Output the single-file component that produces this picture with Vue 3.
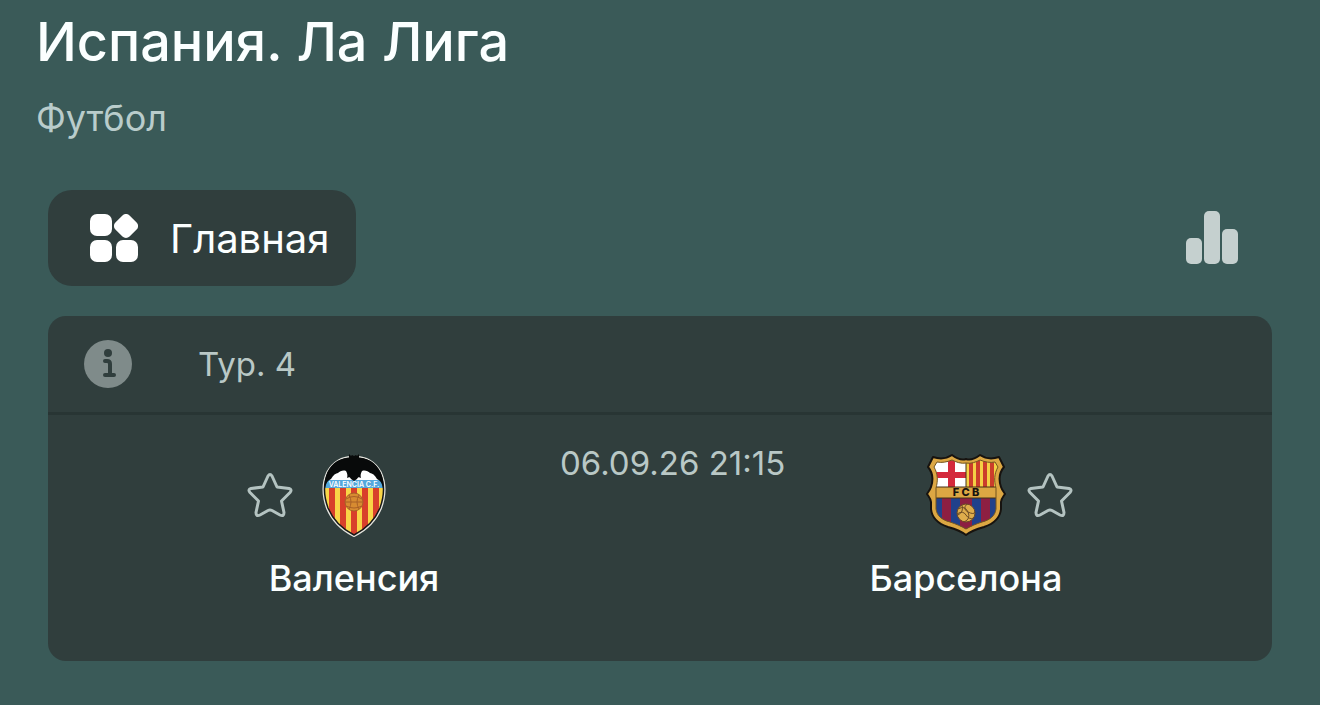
<template>
  <main class="page">
    <header class="heading">
      <h1>{{ league.title }}</h1>
      <p>{{ league.sport }}</p>
    </header>

    <nav class="tabs">
      <button class="tab" type="button">
        <svg class="tab-icon" viewBox="0 0 48 48" aria-hidden="true">
          <rect x="0" y="0" width="22" height="22" rx="7" />
          <rect x="26" y="2" width="20" height="20" rx="5" transform="rotate(45 36 12)" />
          <rect x="0" y="26" width="22" height="22" rx="7" />
          <rect x="26" y="26" width="22" height="22" rx="7" />
        </svg>
        <span>Главная</span>
      </button>
      <button class="stats" type="button" aria-label="Статистика">
        <svg viewBox="0 0 52 54" aria-hidden="true">
          <rect x="0" y="27" width="16" height="26" rx="5" />
          <rect x="18" y="0" width="16" height="53" rx="5" />
          <rect x="36" y="18" width="16" height="35" rx="5" />
        </svg>
      </button>
    </nav>

    <section class="card">
      <div class="card-head">
        <svg class="info" viewBox="0 0 48 48" aria-hidden="true">
          <circle class="info-disc" cx="24" cy="24" r="24" />
          <circle class="info-dot" cx="24" cy="13" r="4" />
          <path class="info-stem" d="M21 21h2q3 0 3 3v11M21 35h9" />
        </svg>
        <span>{{ league.round }}</span>
      </div>

      <div class="match">
        <div class="team">
          <div class="team-top">
            <button class="star" type="button" aria-label="В избранное: Валенсия">
              <svg viewBox="0 0 48 48" aria-hidden="true">
                <path :d="starPath" />
              </svg>
            </button>
            <svg class="crest" viewBox="0 0 84 84" aria-hidden="true">
              <defs>
                <clipPath id="vcf-body">
                  <path :d="valenciaShield" />
                </clipPath>
              </defs>
              <path :d="valenciaShield" fill="#fff" stroke="#e4e4de" stroke-width="4" />
              <g clip-path="url(#vcf-body)">
                <path d="M8 4h68v24H8z" fill="#fff" />
                <rect x="8" y="34" width="68" height="50" fill="#f9d547" />
                <path
                  d="M17 34h6v50h-6zM28 34h6v50h-6zM39 34h6v50h-6zM50 34h6v50h-6zM61 34h6v50h-6z"
                  fill="#d8402b"
                />
                <path d="M8 27h68v8H8z" fill="#55a8dc" />
              </g>
              <path :d="valenciaShield" fill="none" stroke="#171717" stroke-width="1.500" />
              <path :d="valenciaBat" fill="#080a0a" />
              <text x="42" y="34" class="vcf-name">VALENCIA C.F.</text>
              <g class="vcf-ball">
                <circle cx="42" cy="49" r="9" />
                <path d="M34 46q8-5 16 0M34 53q8 4 16 0M37 42q4 7 0 14M47 42q-4 7 0 14M33 49h18" />
              </g>
            </svg>
          </div>
          <span class="team-name">Валенсия</span>
        </div>

        <time class="kickoff" datetime="2026-09-06T21:15">06.09.26 21:15</time>

        <div class="team">
          <div class="team-top">
            <svg class="crest" viewBox="0 0 84 84" aria-hidden="true">
              <defs>
                <clipPath id="fcb-body">
                  <path :d="barcaInner" />
                </clipPath>
              </defs>
              <path :d="barcaShield" fill="#dca743" stroke="#17130f" stroke-width="2" stroke-linejoin="round" />
              <g clip-path="url(#fcb-body)">
                <path d="M8 6h34v28H8z" fill="#fff" />
                <path d="M8 19h34v6H8zM24 6h7v28h-7z" fill="#d4293c" />
                <path d="M42 6h34v28H42z" fill="#f4cf45" />
                <path d="M45 6h4v28h-4zM52 6h4v28h-4zM59 6h4v28h-4zM66 6h4v28h-4z" fill="#cb3d2b" />
                <path d="M8 45h68v36H8z" fill="#21418b" />
                <path d="M18 45h9v36h-9zM36 45h12v36H36zM57 45h9v36h-9z" fill="#8d1f42" />
                <path d="M8 34h68v11H8z" fill="#dca743" />
                <path d="M8 34h68M8 45h68M42 6v28" stroke="#453016" stroke-width="1" />
              </g>
              <path :d="barcaInner" fill="none" stroke="#73551f" stroke-width="1" />
              <text x="42" y="43" class="fcb-name">F C B</text>
              <g class="fcb-ball">
                <circle cx="42" cy="60" r="9" />
                <path d="M34 56q7-4 10 3t-4 10M43 51q-5 5 1 8t7 0M33 61q6-4 9 1t8 3M38 52q2 7-4 10" />
              </g>
            </svg>
            <button class="star star-right" type="button" aria-label="В избранное: Барселона">
              <svg viewBox="0 0 48 48" aria-hidden="true">
                <path :d="starPath" />
              </svg>
            </button>
          </div>
          <span class="team-name">Барселона</span>
        </div>
      </div>
    </section>
  </main>
</template>

<script setup>
const league = {
  title: 'Испания. Ла Лига',
  sport: 'Футбол',
  round: 'Тур. 4'
}

const starPath =
  'M22 5Q24 2 26 5L31 16L43 17.500Q46.500 18.500 44 21.500L35.500 30L38 41.500Q38 46 34 44L26 39.500Q24 38.500 22 39.500L14 44Q10 46 10 41.500L12.500 30L4 21.500Q1.500 18.500 5 17.500L17 16Z'

const valenciaShield =
  'M42 5C31 4 21 10 16 20c-5 11-4 24 0 35 5 12 14 21 26 27 12-6 21-15 26-27 4-11 5-24 0-35C63 10 53 4 42 5z'

const valenciaBat =
  'M42 3l-2-1-1 1-2-2 0 4C25 5 17 13 14 23c-1 4-2 8-1 12 1-5 3-8 6-9 2-4 5-6 7-6 2-2 5-3 8-2 1 2 2 4 1 7 2-1 3-1 4 1l3 2 3-2c1-2 2-2 4-1-1-3 0-5 1-7 3-1 6 0 8 2 2 0 5 2 7 6 3 1 5 4 6 9 1-4 0-8-1-12C67 13 59 5 47 5l0-4-2 2-1-1z'

const barcaShield =
  'M42 6C37 8 32 5 28 2 22 6 15 6 9 4L4 14c6 7 5 14 3 20-1 3-3 5-4 7 2 3 4 5 4 8v7c1 10 8 15 17 18 7 2 13 4 18 8 5-4 11-6 18-8 9-3 16-8 17-18v-7c0-3 2-5 4-8-1-2-3-4-4-7-2-6-3-13 3-20L75 4c-6 2-13 2-19-2-4 3-9 6-14 4z'

const barcaInner =
  'M42 10C37 11 32 9 28 7 23 9 18 10 13 9l-3 5c4 7 4 14 2 21v21c1 7 6 11 14 13 6 2 11 4 16 7 5-3 10-5 16-7 8-2 13-6 14-13V35c-2-7-2-14 2-21l-3-5c-5 1-10 0-15-2-4 2-9 4-14 3z'
</script>

<style>
body {
  margin: 0;
  background: #3a5a58;
}
</style>

<style scoped>
.page {
  padding: 10px 48px 44px;
  color: #fbffff;
  font-family: Inter, 'Liberation Sans', sans-serif;
}
.heading {
  margin-left: -12px;
}
h1 {
  margin: 0;
  font-size: 54px;
  line-height: 64px;
  font-weight: 500;
}
.heading p {
  margin: 20px 0 0;
  font-size: 36px;
  line-height: 48px;
  color: #b9cccb;
}
button {
  border: 0;
  padding: 0;
  background: none;
  color: inherit;
  font-family: inherit;
  cursor: pointer;
}
.tabs {
  display: flex;
  align-items: center;
  justify-content: space-between;
  margin-top: 48px;
  padding-right: 34px;
}
.tab {
  display: flex;
  align-items: center;
  gap: 32px;
  height: 96px;
  padding: 0 26px 0 42px;
  border-radius: 24px;
  background: #303e3d;
  font-size: 40px;
}
.tab-icon {
  width: 48px;
  height: 48px;
  fill: #fff;
}
.stats svg {
  display: block;
  width: 52px;
  height: 54px;
  fill: #c5d0cf;
}
.card {
  margin-top: 30px;
  border-radius: 18px;
  background: #303e3d;
}
.card-head {
  display: flex;
  align-items: center;
  gap: 66px;
  height: 96px;
  padding: 0 36px;
  border-bottom: 3px solid #283534;
  font-size: 33px;
  color: #b9c8c6;
}
.info {
  width: 48px;
  height: 48px;
}
.info-disc {
  fill: #7f8b8a;
}
.info-dot {
  fill: #303e3d;
}
.info-stem {
  fill: none;
  stroke: #303e3d;
  stroke-width: 4;
  stroke-linecap: round;
  stroke-linejoin: round;
}
.match {
  display: grid;
  grid-template-columns: 1fr 240px 1fr;
  padding: 38px 120px 58px;
}
.team {
  display: flex;
  flex-direction: column;
  align-items: center;
  gap: 16px;
}
.team-top {
  display: grid;
  grid-template-columns: 1fr 84px 1fr;
  align-items: center;
  column-gap: 18px;
  width: 100%;
}
.crest {
  grid-column: 2;
  width: 84px;
  height: 84px;
}
.star {
  justify-self: end;
  width: 48px;
  height: 48px;
}
.star-right {
  justify-self: start;
}
.star svg {
  display: block;
  fill: none;
  stroke: #b4c3c1;
  stroke-width: 3;
  stroke-linejoin: round;
}
.team-name {
  font-size: 36px;
  line-height: 50px;
  font-weight: 500;
}
.kickoff {
  padding-left: 20px;
  font-size: 33px;
  line-height: 20px;
  color: #b9c8c6;
  white-space: nowrap;
}
.vcf-name {
  fill: #fff;
  font-size: 7px;
  font-weight: 600;
  text-anchor: middle;
}
.vcf-ball {
  fill: #d78b31;
  stroke: #a96026;
  stroke-width: 1;
}
.vcf-ball path,
.fcb-ball path {
  fill: none;
}
.fcb-name {
  fill: #17130f;
  font-size: 11px;
  font-weight: 800;
  text-anchor: middle;
}
.fcb-ball {
  fill: #dfad4c;
  stroke: #6b4b25;
  stroke-width: 1;
}
</style>
